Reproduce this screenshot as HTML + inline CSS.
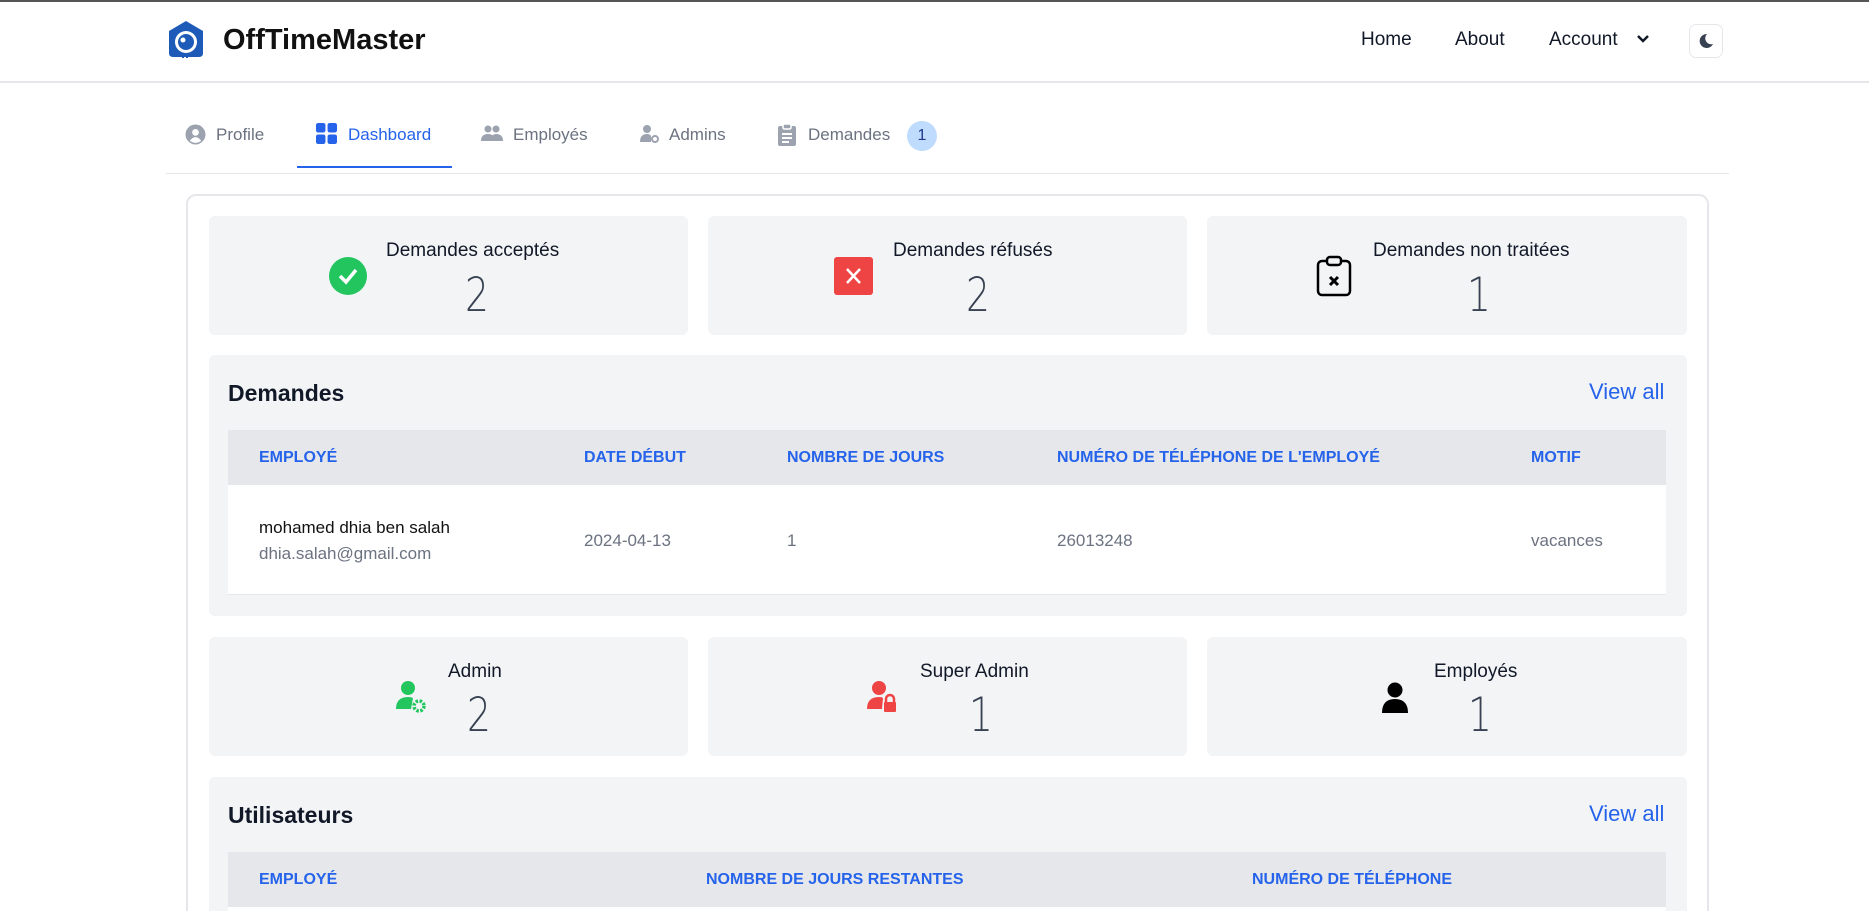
<!DOCTYPE html>
<html style="width:1869px;height:911px;overflow:hidden"><head><meta charset="utf-8"><style>
*{box-sizing:border-box;margin:0;padding:0}
body{width:1869px;height:911px;overflow:hidden;background:#fff;font-family:"Liberation Sans",Arial,sans-serif;position:relative;color:#111827}
.a{position:absolute}
.topline{left:0;top:0;width:1869px;height:2px;background:#555}
.hdr{left:0;top:81px;width:1869px;height:2px;background:#e5e7eb}
.nav{font-size:19px;color:#111827;top:29px}
.tab{font-size:17px;color:#6b7280;top:125px}
.card{background:#f3f4f6;border-radius:6px}
.lbl{font-size:19px;color:#111827;white-space:nowrap}
.num{font-size:47px;color:#374151;font-family:"DejaVu Sans","Liberation Sans",sans-serif;font-weight:200;transform:scaleX(0.8)}
.th{font-size:16px;font-weight:bold;color:#2563eb;text-transform:uppercase;top:0;line-height:55px}
.ttl{font-size:23px;font-weight:bold;color:#111827}
.va{font-size:22px;color:#2563eb}
.td{font-size:17px;color:#6b7280}
</style></head><body>
<div class="a topline"></div>
<svg class="a" style="left:167px;top:20px" width="38" height="40" viewBox="0 0 38 40"><path d="M19 1 L36 11 V33 Q36 37 32 37 H6 Q2 37 2 33 V11 Z" fill="#1e5bb8"/><circle cx="19" cy="22" r="11" fill="#fff"/><circle cx="19" cy="22" r="8" fill="#1e5bb8"/><circle cx="16" cy="20" r="2.5" fill="#fff"/><rect x="15" y="36" width="2" height="2" fill="#1e5bb8"/><rect x="19" y="36" width="2" height="2" fill="#1e5bb8"/></svg>
<div class="a" style="left:223px;top:24px;font-size:29px;font-weight:bold;color:#111">OffTimeMaster</div>
<div class="a nav" style="left:1361px">Home</div>
<div class="a nav" style="left:1455px">About</div>
<div class="a nav" style="left:1549px">Account</div>
<svg class="a" style="left:1636px;top:34px" width="14" height="10" viewBox="0 0 14 10"><path d="M2 2 L7 7 L12 2" stroke="#111827" stroke-width="2.5" fill="none"/></svg>
<div class="a" style="left:1689px;top:24px;width:34px;height:34px;border:1px solid #e5e7eb;border-radius:7px"></div>
<svg class="a" style="left:1696px;top:31px" width="20" height="20" viewBox="0 0 20 20"><path d="M11 3 A7 7 0 1 0 17 13 A6 6 0 0 1 11 3 Z" fill="#374151"/></svg>
<div class="a hdr"></div>

<svg class="a" style="left:185px;top:124px" width="21" height="21" viewBox="0 0 20 20"><circle cx="10" cy="10" r="9.5" fill="#9ca3af"/><circle cx="10" cy="8" r="3.2" fill="#fff"/><path d="M4.5 16 Q10 9 15.5 16 Q10 20 4.5 16Z" fill="#fff"/></svg>
<div class="a tab" style="left:216px">Profile</div>
<svg class="a" style="left:316px;top:123px" width="21" height="21" viewBox="0 0 20 20" fill="#2563eb"><rect x="0" y="0" width="9" height="9" rx="2"/><rect x="11" y="0" width="9" height="9" rx="2"/><rect x="0" y="11" width="9" height="9" rx="2"/><rect x="11" y="11" width="9" height="9" rx="2"/></svg>
<div class="a tab" style="left:348px;color:#2563eb">Dashboard</div>
<div class="a" style="left:297px;top:166px;width:155px;height:2px;background:#2563eb"></div>
<svg class="a" style="left:481px;top:125px" width="22" height="18" viewBox="0 0 22 18" fill="#9ca3af"><circle cx="7" cy="4" r="3.5"/><circle cx="15" cy="4" r="3.5"/><path d="M0 16 Q0 9 7 9 Q14 9 14 16Z"/><path d="M10 16 Q10 9 15 9 Q22 9 22 16Z"/></svg>
<div class="a tab" style="left:513px">Employés</div>
<svg class="a" style="left:640px;top:124px" width="20" height="20" viewBox="0 0 20 20" fill="#9ca3af"><circle cx="7" cy="5" r="4"/><path d="M0 18 Q0 10 7 10 Q10 10 11 12 L11 18Z"/><circle cx="15" cy="15" r="3" fill="none" stroke="#9ca3af" stroke-width="2"/></svg>
<div class="a tab" style="left:669px">Admins</div>
<svg class="a" style="left:778px;top:124px" width="18" height="22" viewBox="0 0 18 22" fill="#9ca3af"><rect x="0" y="2" width="18" height="20" rx="2"/><rect x="5" y="0" width="8" height="5" rx="1.5" fill="#9ca3af" stroke="#fff" stroke-width="1.5"/><rect x="4" y="9" width="10" height="2" fill="#fff"/><rect x="4" y="13" width="10" height="2" fill="#fff"/><rect x="4" y="17" width="7" height="2" fill="#fff"/></svg>
<div class="a tab" style="left:808px">Demandes</div>
<div class="a" style="left:907px;top:121px;width:30px;height:30px;border-radius:50%;background:#bfdbfe;color:#1e3a8a;font-size:16px;text-align:center;line-height:30px">1</div>
<div class="a" style="left:166px;top:173px;width:1563px;height:1px;background:#e5e7eb"></div>

<div class="a" style="left:186px;top:194px;width:1523px;height:740px;border:2px solid #e5e7eb;border-radius:10px"></div>

<div class="a card" style="left:209px;top:216px;width:479px;height:119px"></div>
<div class="a card" style="left:708px;top:216px;width:479px;height:119px"></div>
<div class="a card" style="left:1207px;top:216px;width:480px;height:119px"></div>
<svg class="a" style="left:329px;top:257px" width="38" height="38" viewBox="0 0 38 38"><circle cx="19" cy="19" r="19" fill="#22c55e"/><path d="M11 19 L17 25 L27 13" stroke="#fff" stroke-width="3.5" fill="none"/></svg>
<div class="a lbl" style="left:386px;top:240px">Demandes acceptés</div>
<div class="a num" style="left:462px;top:268px">2</div>
<svg class="a" style="left:834px;top:257px" width="39" height="38" viewBox="0 0 39 38"><rect width="39" height="38" rx="3" fill="#ef4444"/><path d="M13 12 L26 26 M26 12 L13 26" stroke="#fff" stroke-width="2.5"/></svg>
<div class="a lbl" style="left:893px;top:240px">Demandes réfusés</div>
<div class="a num" style="left:963px;top:268px">2</div>
<svg class="a" style="left:1316px;top:255px" width="36" height="42" viewBox="0 0 36 42"><rect x="2" y="6" width="32" height="34" rx="4" fill="none" stroke="#000" stroke-width="2.5"/><rect x="11" y="2" width="14" height="8" rx="3" fill="#f3f4f6" stroke="#000" stroke-width="2.5"/><path d="M14 22 L22 30 M22 22 L14 30" stroke="#000" stroke-width="3"/></svg>
<div class="a lbl" style="left:1373px;top:240px">Demandes non traitées</div>
<div class="a num" style="left:1464px;top:268px">1</div>

<div class="a card" style="left:209px;top:355px;width:1478px;height:261px"></div>
<div class="a ttl" style="left:228px;top:380px">Demandes</div>
<div class="a va" style="left:1589px;top:379px">View all</div>
<div class="a" style="left:228px;top:430px;width:1438px;height:55px;background:#e5e7eb">
<div class="a th" style="left:31px">Employé</div>
<div class="a th" style="left:356px">Date début</div>
<div class="a th" style="left:559px">Nombre de jours</div>
<div class="a th" style="left:829px">Numéro de téléphone de l'employé</div>
<div class="a th" style="left:1303px">Motif</div>
</div>
<div class="a" style="left:228px;top:485px;width:1438px;height:110px;background:#fff;border-bottom:1px solid #e5e7eb">
<div class="a" style="left:31px;top:33px;font-size:17px;color:#111">mohamed dhia ben salah</div>
<div class="a td" style="left:31px;top:59px">dhia.salah@gmail.com</div>
<div class="a td" style="left:356px;top:46px">2024-04-13</div>
<div class="a td" style="left:559px;top:46px">1</div>
<div class="a td" style="left:829px;top:46px">26013248</div>
<div class="a td" style="left:1303px;top:46px">vacances</div>
</div>

<div class="a card" style="left:209px;top:637px;width:479px;height:119px"></div>
<div class="a card" style="left:708px;top:637px;width:479px;height:119px"></div>
<div class="a card" style="left:1207px;top:637px;width:480px;height:119px"></div>
<svg class="a" style="left:394px;top:681px" width="34" height="34" viewBox="0 0 34 34" fill="#22c55e"><circle cx="14" cy="7" r="7"/><path d="M2 28 Q2 16 14 16 Q17 16 19 17 L17 28Z"/><circle cx="25" cy="25" r="5" fill="none" stroke="#22c55e" stroke-width="3.5" stroke-dasharray="2.5 1.5"/><circle cx="25" cy="25" r="2" fill="#f3f4f6"/></svg>
<div class="a lbl" style="left:448px;top:661px">Admin</div>
<div class="a num" style="left:464px;top:688px">2</div>
<svg class="a" style="left:865px;top:681px" width="34" height="34" viewBox="0 0 34 34" fill="#ef4444"><circle cx="14" cy="7" r="7"/><path d="M2 28 Q2 16 14 16 Q17 16 18 17 L17 28Z"/><rect x="19" y="21" width="12" height="10" rx="1"/><path d="M21 22 V18 A4 4 0 0 1 29 18 V22" stroke="#ef4444" stroke-width="2.5" fill="none"/></svg>
<div class="a lbl" style="left:920px;top:661px">Super Admin</div>
<div class="a num" style="left:966px;top:688px">1</div>
<svg class="a" style="left:1380px;top:682px" width="30" height="32" viewBox="0 0 30 32" fill="#000"><circle cx="15" cy="8" r="7.5"/><path d="M2 31 Q2 17 15 17 Q28 17 28 31Z"/></svg>
<div class="a lbl" style="left:1434px;top:661px">Employés</div>
<div class="a num" style="left:1465px;top:688px">1</div>

<div class="a card" style="left:209px;top:777px;width:1478px;height:134px;border-radius:6px 6px 0 0"></div>
<div class="a ttl" style="left:228px;top:802px">Utilisateurs</div>
<div class="a va" style="left:1589px;top:801px">View all</div>
<div class="a" style="left:228px;top:852px;width:1438px;height:55px;background:#e5e7eb">
<div class="a th" style="left:31px">Employé</div>
<div class="a th" style="left:478px">Nombre de jours restantes</div>
<div class="a th" style="left:1024px">Numéro de téléphone</div>
</div>
<div class="a" style="left:228px;top:907px;width:1438px;height:4px;background:#fff"></div>
</body></html>
